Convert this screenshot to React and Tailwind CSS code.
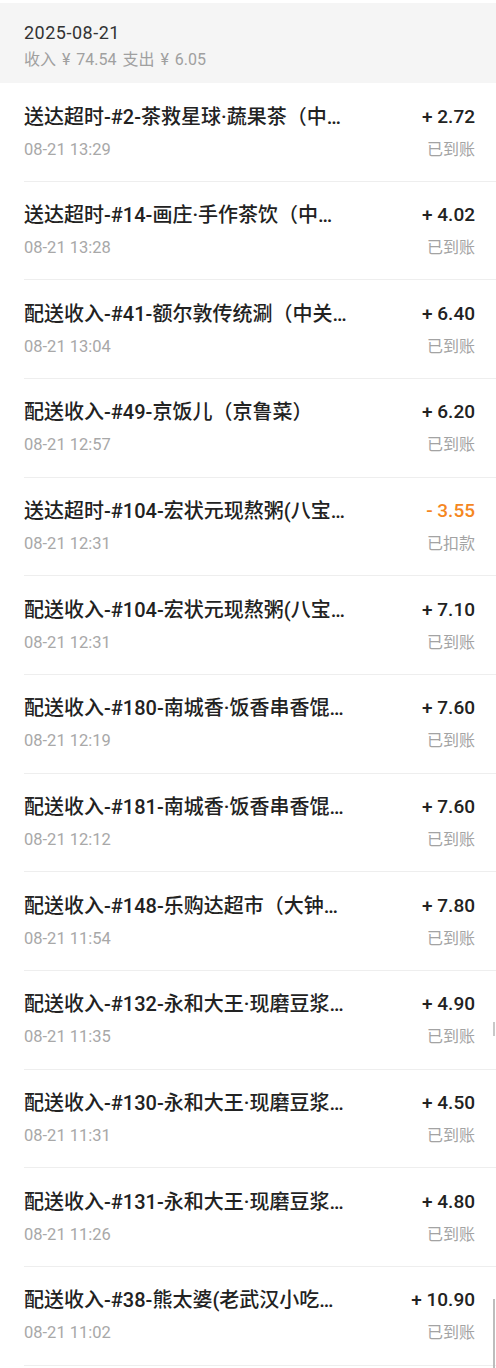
import React from "react";

const records = [
  { title: "送达超时-#2-茶救星球·蔬果茶（中…", time: "08-21 13:29", amount: "+ 2.72" },
  { title: "送达超时-#14-画庄·手作茶饮（中…", time: "08-21 13:28", amount: "+ 4.02" },
  { title: "配送收入-#41-额尔敦传统涮（中关…", time: "08-21 13:04", amount: "+ 6.40" },
  { title: "配送收入-#49-京饭儿（京鲁菜）", time: "08-21 12:57", amount: "+ 6.20" },
  { title: "送达超时-#104-宏状元现熬粥(八宝…", time: "08-21 12:31", amount: "- 3.55", minus: true },
  { title: "配送收入-#104-宏状元现熬粥(八宝…", time: "08-21 12:31", amount: "+ 7.10" },
  { title: "配送收入-#180-南城香·饭香串香馄…", time: "08-21 12:19", amount: "+ 7.60" },
  { title: "配送收入-#181-南城香·饭香串香馄…", time: "08-21 12:12", amount: "+ 7.60" },
  { title: "配送收入-#148-乐购达超市（大钟…", time: "08-21 11:54", amount: "+ 7.80" },
  { title: "配送收入-#132-永和大王·现磨豆浆…", time: "08-21 11:35", amount: "+ 4.90" },
  { title: "配送收入-#130-永和大王·现磨豆浆…", time: "08-21 11:31", amount: "+ 4.50" },
  { title: "配送收入-#131-永和大王·现磨豆浆…", time: "08-21 11:26", amount: "+ 4.80" },
  { title: "配送收入-#38-熊太婆(老武汉小吃…", time: "08-21 11:02", amount: "+ 10.90" },
];

export default function App() {
  return (
    <div
      className="relative w-[496px] h-[1368px] overflow-hidden bg-white pt-[3px]"
      style={{ fontFamily: 'Roboto, "Noto Sans CJK SC", sans-serif' }}
    >
      {/* Day header */}
      <div className="h-[80px] bg-[#f5f5f5] pl-6 pt-[18px]">
        <div className="text-[18px] leading-[24px] tracking-[0.5px] text-[#333]">2025-08-21</div>
        <div className="mt-[4px] text-[16px] leading-[22px] [word-spacing:2px] text-[#a0a0a0]">
          收入 ¥ 74.54 支出 ¥ 6.05
        </div>
      </div>

      {/* Records */}
      <div className="pl-6">
        {records.map((r, i) => (
          <div
            key={i}
            className="flex items-start justify-between border-b border-[#eeeeee] pr-[21px] pt-[20.5px] pb-[20.17px]"
          >
            <div className="flex flex-col min-w-0">
              <div className="max-w-[360px] truncate text-[20px] leading-[26px] font-medium text-[#222]">
                {r.title}
              </div>
              <div className="mt-[9px] text-[16.5px] leading-[22px] text-[#a8a8a8]">
                {r.time}
              </div>
            </div>
            <div className="flex flex-col items-end">
              <div
                className={
                  r.minus
                    ? "text-[19px] leading-[26px] font-medium text-[#f5871f]"
                    : "text-[19px] leading-[26px] font-medium text-[#222]"
                }
              >
                {r.amount}
              </div>
              <div className="mt-[9px] text-[16px] leading-[22px] text-[#a3a3a3]">
                {r.minus ? "已扣款" : "已到账"}
              </div>
            </div>
          </div>
        ))}
      </div>

      {/* scroll indicators */}
      <div className="absolute right-[1px] top-[1022px] h-[14px] w-[2px] bg-[#c8c8c8]" />
      <div className="absolute right-[1px] top-[1299px] h-[69px] w-[2px] bg-[#bdbdbd]" />
    </div>
  );
}
